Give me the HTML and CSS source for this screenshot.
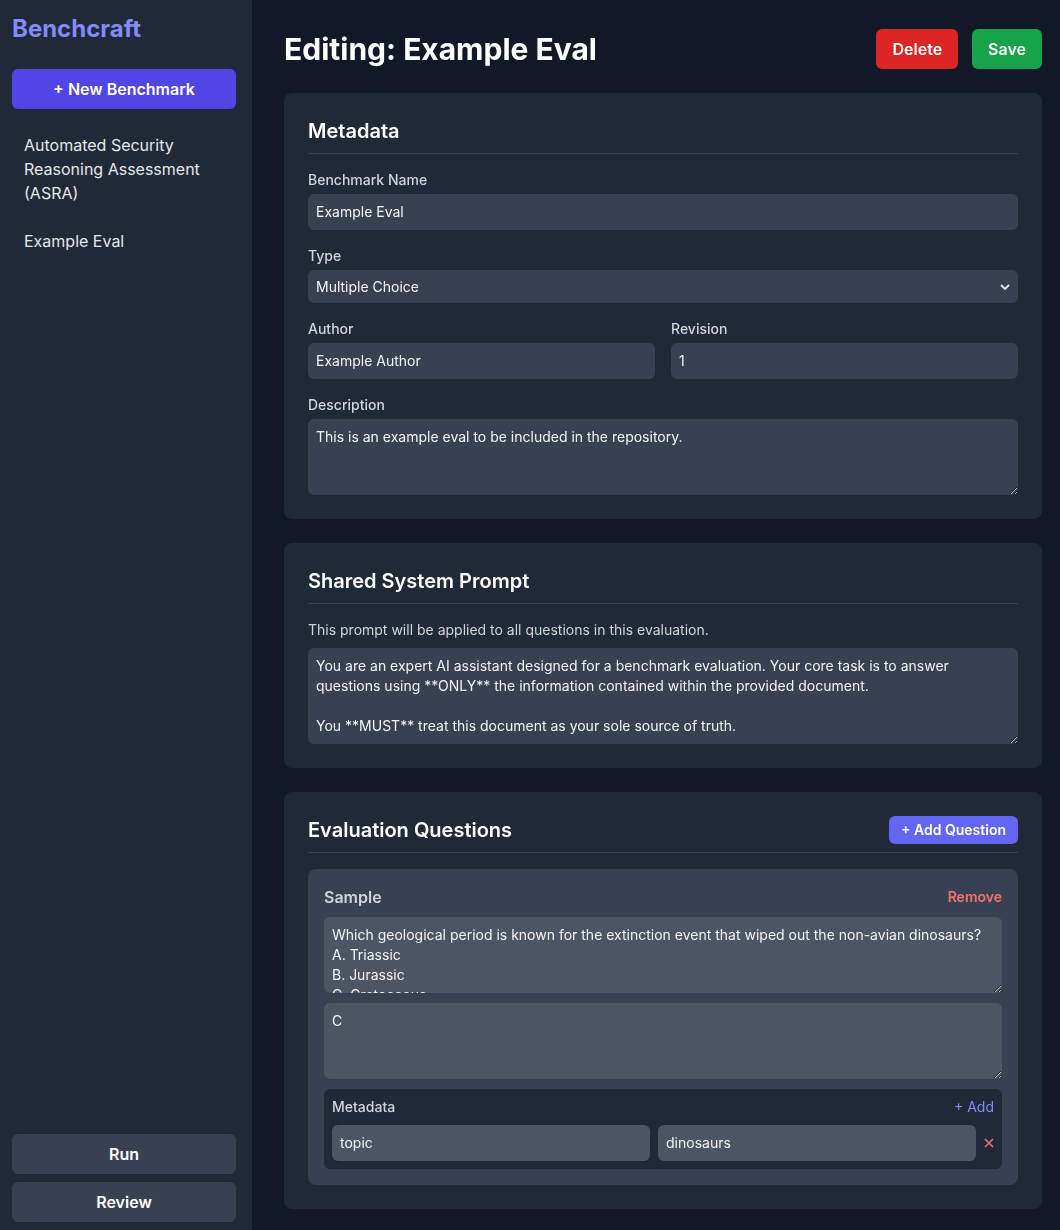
FILE: index.html
```html
<!DOCTYPE html>
<html lang="en">
<head>
  <meta charset="UTF-8" />
  <meta name="viewport" content="width=device-width, initial-scale=1.0" />
  <title>Benchcraft</title>
  <link rel="stylesheet" href="styles.css">
</head>
<body>
  <div class="app">
    <aside class="sidebar">
      <div class="brand">Benchcraft</div>
      <button class="btn-new">+ New Benchmark</button>
      <nav class="bench-list">
        <a class="bench-item" href="#">Automated Security Reasoning Assessment (ASRA)</a>
        <a class="bench-item" href="#">Example Eval</a>
      </nav>
      <div class="sidebar-bottom">
        <button class="btn-side">Run</button>
        <button class="btn-side">Review</button>
      </div>
    </aside>

    <main class="main">
      <header class="page-head">
        <h1>Editing: Example Eval</h1>
        <div class="actions">
          <button class="btn btn-delete">Delete</button>
          <button class="btn btn-save">Save</button>
        </div>
      </header>

      <section class="card">
        <h2 class="card-title">Metadata</h2>
        <div class="field">
          <label for="name">Benchmark Name</label>
          <input id="name" type="text" value="Example Eval" />
        </div>
        <div class="field">
          <label for="type">Type</label>
          <div class="select-wrap">
            <select id="type">
              <option>Multiple Choice</option>
              <option>Free Response</option>
            </select>
            <svg class="chevron" width="10" height="6" viewBox="0 0 10 6"><path d="M1 1l4 4 4-4" fill="none" stroke="#e5e7eb" stroke-width="1.8"/></svg>
          </div>
        </div>
        <div class="field two-col">
          <div>
            <label for="author">Author</label>
            <input id="author" type="text" value="Example Author" />
          </div>
          <div>
            <label for="revision">Revision</label>
            <input id="revision" type="text" value="1" />
          </div>
        </div>
        <div class="field">
          <label for="desc">Description</label>
          <textarea id="desc" rows="3">This is an example eval to be included in the repository.</textarea>
        </div>
      </section>

      <section class="card">
        <h2 class="card-title">Shared System Prompt</h2>
        <p class="help">This prompt will be applied to all questions in this evaluation.</p>
        <textarea rows="4">You are an expert AI assistant designed for a benchmark evaluation. Your core task is to answer questions using **ONLY** the information contained within the provided document.

You **MUST** treat this document as your sole source of truth.

Do not use any outside knowledge.</textarea>
      </section>

      <section class="card">
        <div class="card-title card-title-row">
          <h2>Evaluation Questions</h2>
          <button class="btn-add">+ Add Question</button>
        </div>

        <div class="question">
          <div class="question-head">
            <span class="question-name">Sample</span>
            <button class="btn-remove">Remove</button>
          </div>
          <textarea class="q-input" rows="3">Which geological period is known for the extinction event that wiped out the non-avian dinosaurs?
A. Triassic
B. Jurassic
C. Cretaceous
D. Permian</textarea>
          <textarea class="q-input" rows="3">C</textarea>
          <div class="meta-box">
            <div class="meta-head">
              <span>Metadata</span>
              <button class="btn-link">+ Add</button>
            </div>
            <div class="meta-row">
              <input class="q-field" type="text" value="topic" />
              <input class="q-field" type="text" value="dinosaurs" />
              <button class="btn-x"><svg width="10" height="10" viewBox="0 0 10 10"><path d="M1 1l8 8M9 1l-8 8" stroke="#f87171" stroke-width="1.5"/></svg></button>
            </div>
          </div>
        </div>
      </section>
    </main>
  </div>
</body>
</html>
```

FILE: styles.css
```css
* {
  box-sizing: border-box;
}
body {
  margin: 0;
  font-family: Inter, "Noto Sans", sans-serif;
  background-color: #111827;
  color: #f3f4f6;
}
button {
  font-family: inherit;
  cursor: pointer;
  border: none;
}
.app {
  display: flex;
  height: 100vh;
}
.sidebar {
  width: 252px;
  flex-shrink: 0;
  background-color: #1f2937;
  padding: 13px 16px 8px 12px;
  display: flex;
  flex-direction: column;
}
.brand {
  font-size: 24px;
  line-height: 32px;
  font-weight: 700;
  color: #818cf8;
  margin-bottom: 24px;
}
.btn-new {
  background-color: #4f46e5;
  color: #fff;
  font-size: 16px;
  line-height: 24px;
  font-weight: 600;
  padding: 8px 16px;
  border-radius: 6px;
}
.bench-list {
  margin-top: 16px;
  display: flex;
  flex-direction: column;
  gap: 8px;
}
.bench-item {
  display: block;
  padding: 8px 12px;
  color: #e5e7eb;
  font-size: 16px;
  line-height: 24px;
  text-decoration: none;
  border-radius: 6px;
}
.sidebar-bottom {
  margin-top: auto;
  display: flex;
  flex-direction: column;
  gap: 8px;
}
.btn-side {
  background-color: #374151;
  color: #fff;
  font-size: 16px;
  line-height: 24px;
  font-weight: 600;
  padding: 8px 16px;
  border-radius: 6px;
}
.main {
  flex: 1;
  overflow-y: auto;
  scrollbar-width: none;
  padding: 29px 18px 32px 32px;
}
.page-head {
  display: flex;
  justify-content: space-between;
  align-items: center;
  margin-bottom: 24px;
}
.page-head h1 {
  margin: 0;
  font-size: 30px;
  line-height: 36px;
  font-weight: 700;
  color: #fff;
}
.actions {
  display: flex;
  gap: 14px;
}
.btn {
  color: #fff;
  font-size: 16px;
  line-height: 24px;
  font-weight: 600;
  padding: 8px 16px;
  border-radius: 6px;
}
.btn-delete {
  background-color: #dc2626;
}
.btn-save {
  background-color: #16a34a;
}
.card {
  background-color: #1f2937;
  border-radius: 8px;
  padding: 24px;
  margin-bottom: 24px;
}
.card-title {
  margin: 0 0 16px;
  padding-bottom: 8px;
  border-bottom: 1px solid #374151;
  font-size: 20px;
  line-height: 28px;
  font-weight: 600;
  color: #fff;
}
.card-title-row {
  display: flex;
  justify-content: space-between;
  align-items: center;
}
.card-title-row h2 {
  margin: 0;
  font-size: 20px;
  line-height: 28px;
  font-weight: 600;
}
.field {
  margin-bottom: 16px;
}
.field:last-child {
  margin-bottom: 0;
}
.field label {
  display: block;
  font-size: 14px;
  line-height: 20px;
  font-weight: 500;
  color: #d1d5db;
  margin-bottom: 4px;
}
.two-col {
  display: grid;
  grid-template-columns: 1fr 1fr;
  gap: 16px;
}
input, select, textarea {
  display: block;
  width: 100%;
  font-family: inherit;
  font-size: 14px;
  line-height: 20px;
  color: #f3f4f6;
  background-color: #374151;
  border: none;
  border-radius: 6px;
  padding: 8px;
  outline: none;
  color-scheme: dark;
}
textarea {
  resize: vertical;
  scrollbar-width: none;
}
.select-wrap {
  position: relative;
}
select {
  appearance: none;
  height: 33px;
  padding: 6px 8px;
}
.chevron {
  position: absolute;
  right: 8px;
  top: 14px;
  pointer-events: none;
}
.help {
  margin: 0 0 8px;
  font-size: 14px;
  line-height: 20px;
  color: #d1d5db;
}
.btn-add {
  background-color: #6366f1;
  color: #fff;
  font-size: 14px;
  line-height: 20px;
  font-weight: 600;
  padding: 4px 12px;
  border-radius: 6px;
}
.question {
  background-color: #374151;
  border-radius: 8px;
  padding: 16px;
}
.question-head {
  display: flex;
  justify-content: space-between;
  align-items: center;
  margin-bottom: 8px;
}
.question-name {
  font-size: 16px;
  line-height: 24px;
  font-weight: 600;
  color: #d1d5db;
}
.btn-remove {
  background: none;
  padding: 0;
  color: #f87171;
  font-size: 14px;
  line-height: 20px;
  font-weight: 600;
}
.q-input {
  background-color: #4b5563;
  margin-bottom: 10px;
}
.meta-box {
  background-color: #1f2937;
  border-radius: 6px;
  padding: 8px;
}
.meta-head {
  display: flex;
  justify-content: space-between;
  align-items: center;
  margin-bottom: 8px;
  font-size: 14px;
  line-height: 20px;
  font-weight: 500;
  color: #d1d5db;
}
.btn-link {
  background: none;
  padding: 0;
  color: #818cf8;
  font-size: 14px;
  line-height: 20px;
}
.meta-row {
  display: flex;
  align-items: center;
  gap: 8px;
}
.q-field {
  flex: 1;
  min-width: 0;
  background-color: #4b5563;
}
.btn-x {
  background: none;
  padding: 0;
  width: 10px;
  height: 10px;
  display: flex;
}
```
